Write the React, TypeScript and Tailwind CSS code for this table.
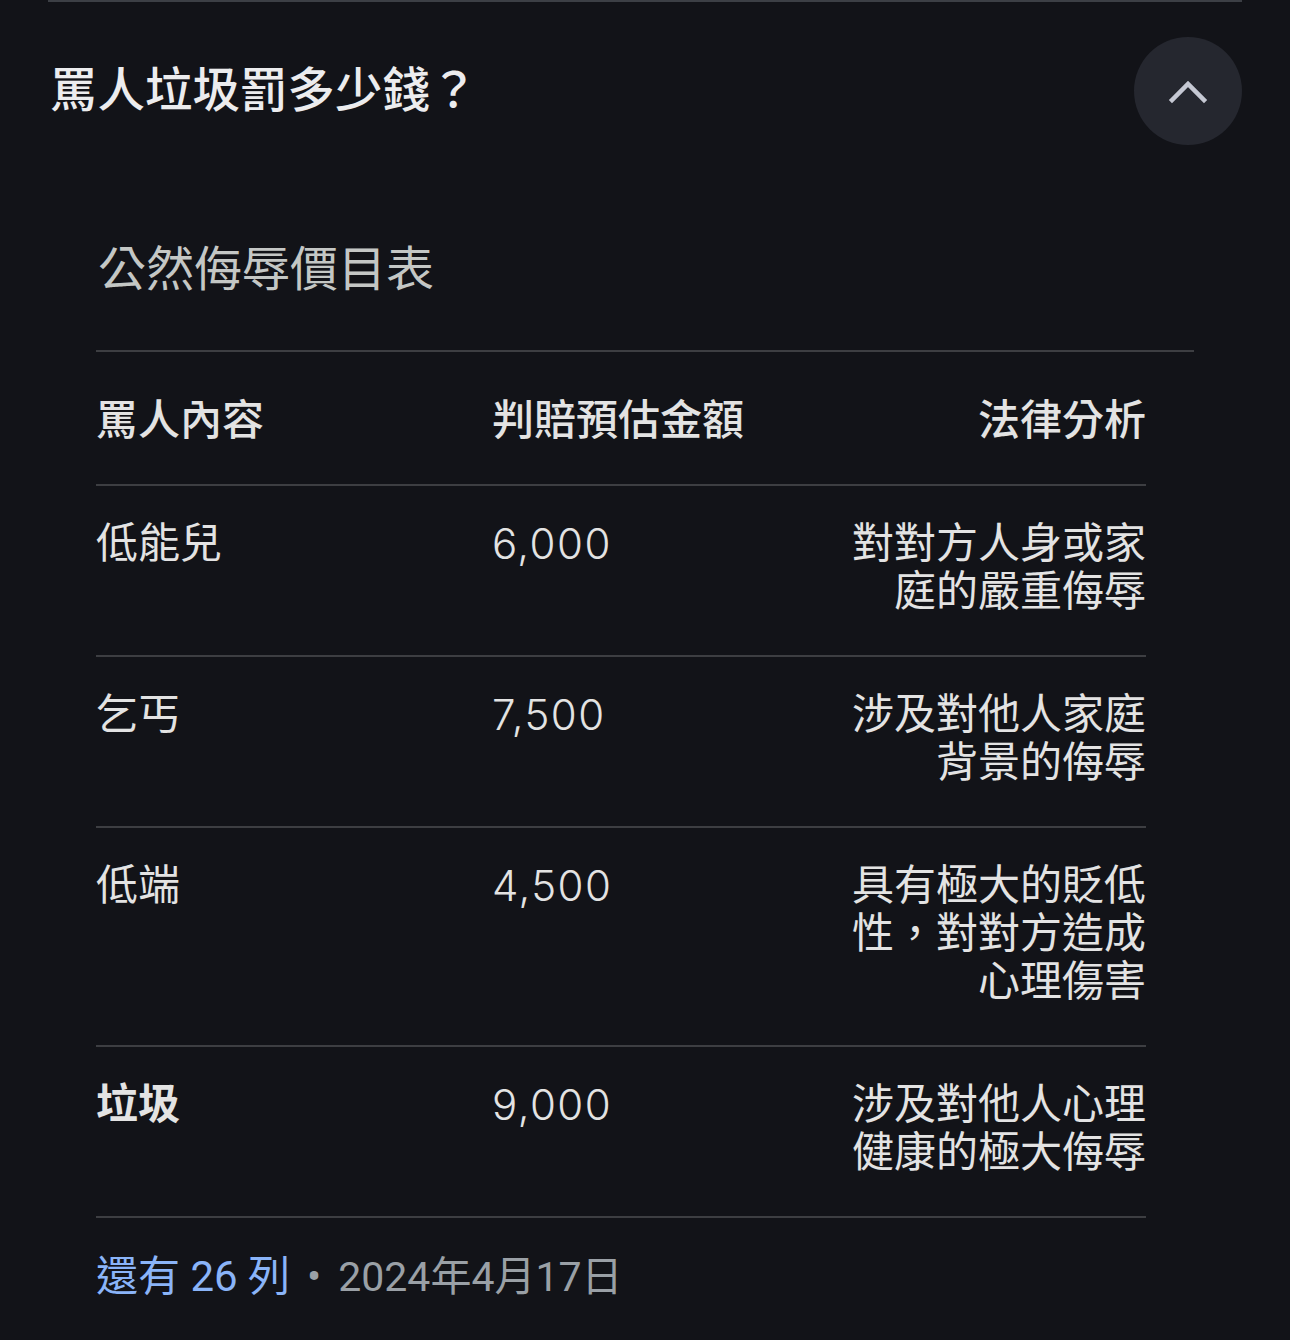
import React from 'react'

const rows = [
  { word: '低能兒', amount: '6,000', note: '對對方人身或家庭的嚴重侮辱', bold: false },
  { word: '乞丐', amount: '7,500', note: '涉及對他人家庭背景的侮辱', bold: false },
  { word: '低端', amount: '4,500', note: '具有極大的貶低性，對對方造成心理傷害', bold: false },
  { word: '垃圾', amount: '9,000', note: '涉及對他人心理健康的極大侮辱', bold: true },
]

export default function App() {
  return (
    <div
      className="min-h-[1340px] w-[1290px] bg-[#121318] px-[48px] text-[#e3e3e3]"
      style={{ fontFamily: 'Roboto, "Noto Sans CJK TC", sans-serif' }}
    >
      <div className="border-t-2 border-[#3c3f45]">
        {/* Question header */}
        <div className="flex items-center justify-between pt-[35px]">
          <h2 className="pl-[2px] text-[47.5px] font-medium leading-[56px] text-[#ececee]">
            罵人垃圾罰多少錢？
          </h2>
          <button className="flex h-[108px] w-[108px] items-center justify-center rounded-full bg-[#25272f]">
            <svg width="40" height="26" viewBox="0 0 40 26" fill="none">
              <path
                d="M4 22 L20 6 L36 22"
                stroke="#c5c8d3"
                strokeWidth="4.5"
                strokeLinecap="square"
                strokeLinejoin="miter"
              />
            </svg>
          </button>
        </div>

        {/* Table card */}
        <div className="px-[48px]">
          <h3 className="mt-[97px] pl-[2px] text-[48px] leading-[56px] text-[#c4c7c5]">公然侮辱價目表</h3>

          <div className="mt-[52px] border-t-2 border-[#3d3e42]">
            <div className="w-[1050px]">
              <div className="grid grid-cols-[396px_1fr_300px] border-b-2 border-[#3d3e42] pb-[39px] pt-[45px] text-[42px] font-medium leading-[48px]">
                <div>罵人內容</div>
                <div>判賠預估金額</div>
                <div className="text-right">法律分析</div>
              </div>

              {rows.map((r) => (
                <div
                  key={r.word}
                  className="grid grid-cols-[396px_1fr_300px] border-b-2 border-[#3d3e42] pb-[39px] pt-[34px] text-[42px] leading-[48px]"
                >
                  <div className={r.bold ? 'font-bold' : ''}>{r.word}</div>
                  <div className="font-light tracking-[0.035em]" style={{ fontFamily: 'Inter, Roboto, sans-serif' }}>
                    {r.amount}
                  </div>
                  <div className="text-right">{r.note}</div>
                </div>
              ))}

              <div className="mt-[35px] flex items-center text-[42px] leading-[48px]">
                <span className="text-[#8ab4f8]">還有 26 列</span>
                <span className="mx-[17px] text-[#9aa0a6]">•</span>
                <span className="text-[41px] text-[#9aa0a6]">2024年4月17日</span>
              </div>
            </div>
          </div>
        </div>
      </div>
    </div>
  )
}
